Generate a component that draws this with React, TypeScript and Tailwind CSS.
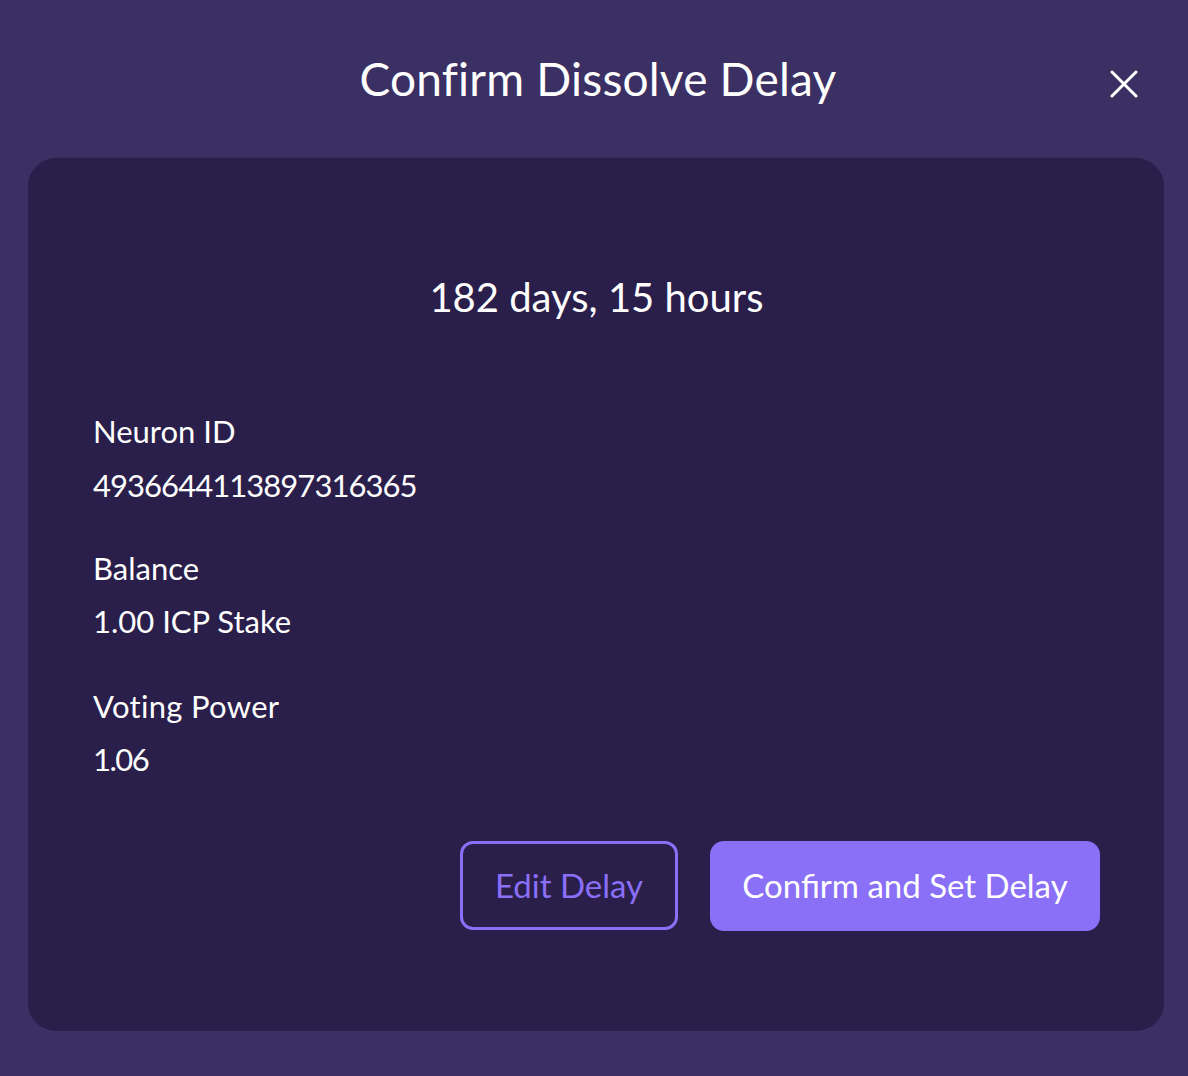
import React from "react";

export default function App() {
  const font = { fontFamily: "Lato, 'Noto Sans', sans-serif" };
  return (
    <div className="w-full h-[1076px] bg-[#3b3063] flex flex-col text-white" style={font}>
      <div className="relative h-[158px] shrink-0 flex items-start justify-center">
        <h1 className="mt-[51px] ml-[8px] text-[46px] leading-[56px] font-normal tracking-[0.2px]">Confirm Dissolve Delay</h1>
        <button className="absolute right-[50px] top-[70px] w-[28px] h-[28px] flex items-center justify-center">
          <svg width="28" height="28" viewBox="0 0 28 28" fill="none" stroke="white" strokeWidth="3" strokeLinecap="round">
            <path d="M2 2L26 26M26 2L2 26" />
          </svg>
        </button>
      </div>
      <div className="ml-[28px] mr-[24px] h-[873px] rounded-[28px] bg-[#2a1e4b] pl-[65px] pr-[64px] pt-[115px] pb-[100px] flex flex-col">
        <div className="h-[48px] leading-[48px] text-[40px] text-center">182 days, 15 hours</div>
        <div className="mt-[90px] flex flex-col gap-[14px]">
          <div className="h-[40px] leading-[40px] text-[31px]">Neuron ID</div>
          <div className="h-[40px] leading-[40px] text-[31px] tracking-[-0.95px]">4936644113897316365</div>
        </div>
        <div className="mt-[43px] flex flex-col gap-[13px]">
          <div className="h-[40px] leading-[40px] text-[31px]">Balance</div>
          <div className="h-[40px] leading-[40px] text-[31px]">1.00 ICP Stake</div>
        </div>
        <div className="mt-[45px] flex flex-col gap-[13px]">
          <div className="h-[40px] leading-[40px] text-[31px] tracking-[0.3px]">Voting Power</div>
          <div className="h-[40px] leading-[40px] text-[31px] tracking-[-1.5px]">1.06</div>
        </div>
        <div className="mt-[62px] flex justify-end gap-[32px]">
          <button className="w-[218px] h-[89px] rounded-[13px] border-[3px] border-[#8a6ff7] text-[#8a6ff7] text-[33px] flex items-center justify-center">
            Edit Delay
          </button>
          <button className="w-[390px] h-[90px] rounded-[14px] bg-[#8a6ff7] text-white text-[33px] flex items-center justify-center">
            Confirm and Set Delay
          </button>
        </div>
      </div>
    </div>
  );
}
